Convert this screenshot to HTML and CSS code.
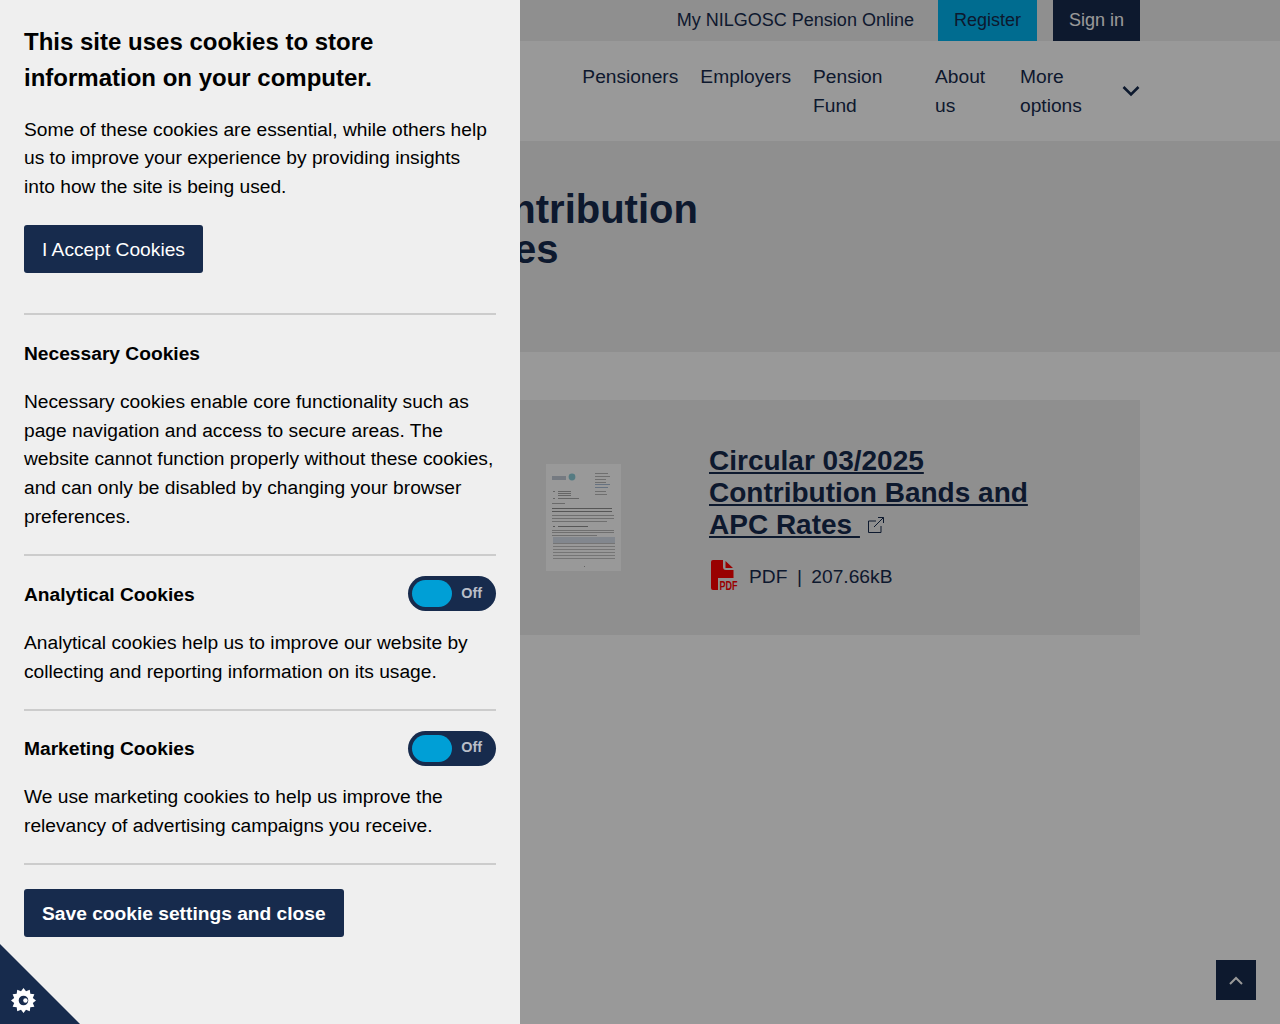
FILE: index.html
```html
<!DOCTYPE html>
<html lang="en">
<head>
    <meta charset="UTF-8">
    <meta name="viewport" content="width=device-width, initial-scale=1.0">
    <title>Circular 03/2025 Contribution Bands and APC Rates</title>
    <link rel="stylesheet" href="styles.css">
</head>
<body>
    <!-- Top bar -->
    <div class="topbar">
        <div class="wrap topbar-inner">
            <a href="#" class="topbar-link">My NILGOSC Pension Online</a>
            <a href="#" class="topbar-btn btn-register">Register</a>
            <a href="#" class="topbar-btn btn-signin">Sign in</a>
        </div>
    </div>

    <!-- Main navigation -->
    <nav class="mainnav">
        <div class="wrap mainnav-inner">
            <a href="#" class="nav-item">Pensioners</a>
            <a href="#" class="nav-item">Employers</a>
            <a href="#" class="nav-item nav-fund">Pension Fund</a>
            <a href="#" class="nav-item nav-about">About us</a>
            <a href="#" class="nav-item nav-more">More options</a>
            <svg class="nav-chevron" viewBox="0 0 18 12" width="18" height="12">
                <path d="M1.5 2 L9 9.5 L16.5 2" fill="none" stroke="#172b4d" stroke-width="2.6"/>
            </svg>
        </div>
    </nav>

    <!-- Page title -->
    <header class="hero">
        <div class="wrap">
            <h1>Circular 03/2025 Contribution<br>Bands and APC Rates</h1>
        </div>
    </header>

    <!-- Document card -->
    <main class="wrap">
        <div class="doc-card">
            <svg class="doc-thumb" viewBox="0 0 75 107" width="75" height="107">
                <rect width="75" height="107" fill="#fff"/>
                <g class="thumb-ink">
                    <rect x="6" y="12" width="14" height="4" fill="#8a9bb0"/>
                    <circle cx="26" cy="13" r="3.4" fill="#1f9fb5"/>
                    <rect x="49" y="9" width="13" height="1" fill="#777"/>
                    <rect x="49" y="12" width="15" height="1" fill="#777"/>
                    <rect x="49" y="15" width="11" height="1" fill="#777"/>
                    <rect x="49" y="18" width="11" height="1" fill="#777"/>
                    <rect x="49" y="20" width="15" height="1" fill="#5a7fb0"/>
                    <rect x="49" y="23" width="13" height="1" fill="#5a7fb0"/>
                    <rect x="49" y="27" width="11" height="1" fill="#777"/>
                    <rect x="49" y="30" width="12" height="1" fill="#777"/>
                    <rect x="7" y="27" width="2" height="1" fill="#555"/>
                    <rect x="12" y="27" width="13" height="1" fill="#555"/>
                    <rect x="12" y="29" width="13" height="1" fill="#555"/>
                    <rect x="12" y="31" width="13" height="1" fill="#555"/>
                    <rect x="7" y="34" width="2" height="1" fill="#555"/>
                    <rect x="12" y="34" width="21" height="1" fill="#555"/>
                    <rect x="6" y="39" width="13" height="1" fill="#666"/>
                    <rect x="6" y="44" width="60" height="1" fill="#222"/>
                    <rect x="6" y="47" width="60" height="1" fill="#222"/>
                    <rect x="6" y="51" width="62" height="1" fill="#777"/>
                    <rect x="6" y="54" width="62" height="1" fill="#777"/>
                    <rect x="6" y="57" width="55" height="1" fill="#777"/>
                    <rect x="7" y="62" width="2" height="1" fill="#222"/>
                    <rect x="12" y="62" width="30" height="1" fill="#222"/>
                    <rect x="6" y="66" width="62" height="1" fill="#777"/>
                    <rect x="6" y="68" width="62" height="1" fill="#777"/>
                    <rect x="6" y="71" width="45" height="1" fill="#777"/>
                    <rect x="7" y="73" width="62" height="6" fill="#b4c4dc"/>
                    <rect x="7" y="79" width="62" height="1" fill="#888"/>
                    <rect x="7" y="82" width="62" height="1" fill="#888"/>
                    <rect x="7" y="85" width="62" height="1" fill="#888"/>
                    <rect x="7" y="88" width="62" height="1" fill="#888"/>
                    <rect x="7" y="91" width="62" height="1" fill="#888"/>
                    <rect x="7" y="94" width="62" height="1" fill="#888"/>
                    <rect x="38" y="102" width="1" height="1" fill="#555"/>
                </g>
            </svg>
            <div class="doc-info">
                <h2 class="doc-title">
                    <a href="#">Circular 03/2025 Contribution Bands and APC Rates&nbsp;</a><svg class="ext-icon" viewBox="0 0 16 16" width="16" height="16">
                        <path d="M13 9 V15.5 H0.5 V4 H8 M6 10 L15.5 0.5 M10 0.5 H15.5 V6" fill="none" stroke="#172b4d" stroke-width="1"/>
                    </svg>
                </h2>
                <p class="doc-meta">
                    <svg class="pdf-icon" viewBox="0 0 27 31" width="27" height="31">
                        <path d="M2 0 H12 V7 Q12 10 15 10 H22.5 V18 H7 V30 H2 Q0 30 0 28 V2 Q0 0 2 0 Z M14.5 1 L22 8 H14.5 Z" fill="#f00"/>
                        <text x="8.5" y="30" class="pdf-label" textLength="18" lengthAdjust="spacingAndGlyphs">PDF</text>
                    </svg>
                    <span class="doc-size">PDF<span class="doc-sep">|</span>207.66kB</span>
                </p>
            </div>
        </div>
    </main>

    <a href="#" class="to-top">
        <svg viewBox="0 0 14 9" width="14" height="9">
            <path d="M1 8 L7 2 L13 8" fill="none" stroke="#fff" stroke-width="2"/>
        </svg>
    </a>

    <div class="overlay"></div>

    <!-- Cookie panel -->
    <aside class="cookie-panel">
        <h2 class="cookie-title">This site uses cookies to store information on your computer.</h2>
        <p>Some of these cookies are essential, while others help us to improve your experience by providing insights into how the site is being used.</p>
        <button class="cookie-btn accept-btn">I Accept Cookies</button>

        <section class="cookie-section necessary">
            <h3>Necessary Cookies</h3>
            <p>Necessary cookies enable core functionality such as page navigation and access to secure areas. The website cannot function properly without these cookies, and can only be disabled by changing your browser preferences.</p>
        </section>

        <section class="cookie-section">
            <div class="cookie-row">
                <h3>Analytical Cookies</h3>
                <div class="toggle"><span class="knob"></span><span class="toggle-label">Off</span></div>
            </div>
            <p>Analytical cookies help us to improve our website by collecting and reporting information on its usage.</p>
        </section>

        <section class="cookie-section">
            <div class="cookie-row">
                <h3>Marketing Cookies</h3>
                <div class="toggle"><span class="knob"></span><span class="toggle-label">Off</span></div>
            </div>
            <p>We use marketing cookies to help us improve the relevancy of advertising campaigns you receive.</p>
        </section>

        <div class="cookie-section save-row">
            <button class="cookie-btn save-btn">Save cookie settings and close</button>
        </div>
    </aside>

    <!-- Cookie corner tab -->
    <a href="#" class="cookie-corner">
        <svg class="cookie-gear" viewBox="0 0 26 26" width="25" height="25">
            <path fill="#fff" fill-rule="evenodd" d="M13 0 L15.6 3.3 L19.5 1.7 L20.1 5.9 L24.3 6.5 L22.7 10.4 L26 13 L22.7 15.6 L24.3 19.5 L20.1 20.1 L19.5 24.3 L15.6 22.7 L13 26 L10.4 22.7 L6.5 24.3 L5.9 20.1 L1.7 19.5 L3.3 15.6 L0 13 L3.3 10.4 L1.7 6.5 L5.9 5.9 L6.5 1.7 L10.4 3.3 Z M13 8 A5 5 0 1 0 13 18 A5 5 0 1 0 13 8 Z"/>
            <circle cx="15" cy="13" r="2.3" fill="#fff"/>
        </svg>
    </a>
</body>
</html>
```

FILE: styles.css
```css
/* Page */
* {
    box-sizing: border-box;
}

body {
    margin: 0;
    min-height: 1024px;
    font-family: "Liberation Sans", Arial, sans-serif;
    font-size: 19.2px;
    line-height: 1.5;
    color: #172b4d;
    background: #fff;
    overflow: hidden;
}

a {
    color: inherit;
    text-decoration: none;
}

.wrap {
    width: 1000px;
    margin: 0 auto;
}

/* Top bar */
.topbar {
    background: #eee;
    height: 41px;
}

.topbar-inner {
    display: flex;
    justify-content: flex-end;
    align-items: stretch;
    height: 41px;
    font-size: 18px;
}

.topbar-link {
    line-height: 41px;
    margin-right: 24px;
}

.topbar-btn {
    line-height: 41px;
    padding: 0 16px;
}

.btn-register {
    background: #00b4f0;
    margin-right: 16px;
}

.btn-signin {
    background: #172b4d;
    color: #fff;
}

/* Main navigation */
.mainnav {
    background: #fff;
    height: 100px;
}

.mainnav-inner {
    display: flex;
    justify-content: flex-end;
    align-items: flex-start;
    height: 100px;
    padding-top: 22px;
}

.nav-item {
    margin-right: 22px;
}

.nav-fund {
    width: 99px;
    margin-right: 23px;
}

.nav-about {
    width: 62px;
    margin-right: 23px;
}

.nav-more {
    width: 79px;
    margin-right: 23px;
}

.nav-chevron {
    display: block;
    margin-top: 22px;
}

/* Page title */
.hero {
    background: #eee;
    height: 211px;
    padding-top: 48px;
}

.hero h1 {
    margin: 0;
    font-size: 40px;
    line-height: 40px;
    color: #172b4d;
}

/* Document card */
.doc-card {
    display: flex;
    align-items: flex-start;
    gap: 88px;
    height: 235px;
    margin-top: 48px;
    padding: 44.5px 0 0 406px;
    background: #eee;
}

.doc-thumb {
    display: block;
    flex: none;
    margin-top: 19.5px;
}

.thumb-ink {
    opacity: 0.5;
    filter: blur(0.4px);
}

.doc-info {
    width: 340px;
}

.doc-title {
    margin: 0 0 19.5px;
    font-size: 28px;
    line-height: 32px;
}

.doc-title a {
    text-decoration: underline;
}

.ext-icon {
    margin-left: 8px;
    position: relative;
    top: -1px;
}

.doc-meta {
    display: flex;
    align-items: center;
    gap: 11px;
    margin: 0 0 0 2px;
    white-space: nowrap;
}

.pdf-icon {
    overflow: visible;
}

.doc-size {
    padding-top: 3px;
}

.doc-sep {
    margin: 0 9.5px;
}

.pdf-label {
    font-size: 13px;
    font-weight: bold;
    fill: #f00;
}

/* Back to top */
.to-top {
    position: fixed;
    right: 24px;
    bottom: 24px;
    width: 40px;
    height: 40px;
    display: flex;
    align-items: center;
    justify-content: center;
    background: #172b4d;
}

/* Dark layer over the page */
.overlay {
    position: fixed;
    inset: 0;
    background: rgba(0, 0, 0, 0.4);
}

/* Cookie panel */
.cookie-panel {
    position: fixed;
    top: 0;
    left: 0;
    bottom: 0;
    width: 520px;
    padding: 24px;
    background: #efefef;
    color: #000;
}

.cookie-panel p {
    margin: 0;
}

.cookie-title {
    margin: 0 0 19.6px;
    font-size: 24px;
    line-height: 36px;
}

.cookie-btn {
    display: block;
    height: 48px;
    padding: 2px 18px 0;
    border: none;
    border-radius: 3px;
    background: #172b4d;
    color: #fff;
    font-family: inherit;
    font-size: 19.2px;
}

.accept-btn {
    margin: 23.4px 0 40px;
}

.save-btn {
    font-weight: bold;
}

.cookie-section {
    border-top: 2px solid #ccc;
    padding: 19.5px 0 22.2px;
}

.cookie-section.necessary {
    padding-bottom: 22.6px;
}

.cookie-section h3 {
    margin: 0;
    padding-top: 1px;
    font-size: 19.2px;
    line-height: 36px;
}

.necessary h3 {
    margin-bottom: 16px;
}

.cookie-row {
    display: flex;
    align-items: flex-start;
    justify-content: space-between;
    margin-bottom: 16px;
}

.save-row {
    padding-top: 24px;
}

/* Toggle */
.toggle {
    display: flex;
    align-items: center;
    justify-content: space-between;
    width: 88px;
    height: 35px;
    margin-top: 0.3px;
    padding: 0 14px 0 4px;
    border-radius: 18px;
    background: #172b4d;
}

.knob {
    width: 40px;
    height: 27px;
    border-radius: 14px;
    background: #009fd6;
}

.toggle-label {
    font-size: 14.4px;
    font-weight: bold;
    color: #b9bec8;
}

/* Cookie corner tab */
.cookie-corner {
    position: fixed;
    left: 0;
    bottom: 0;
    width: 80px;
    height: 80px;
    background: #172b4d;
    clip-path: polygon(0 0, 100% 100%, 0 100%);
}

.cookie-gear {
    position: absolute;
    left: 11px;
    bottom: 11px;
}
```
